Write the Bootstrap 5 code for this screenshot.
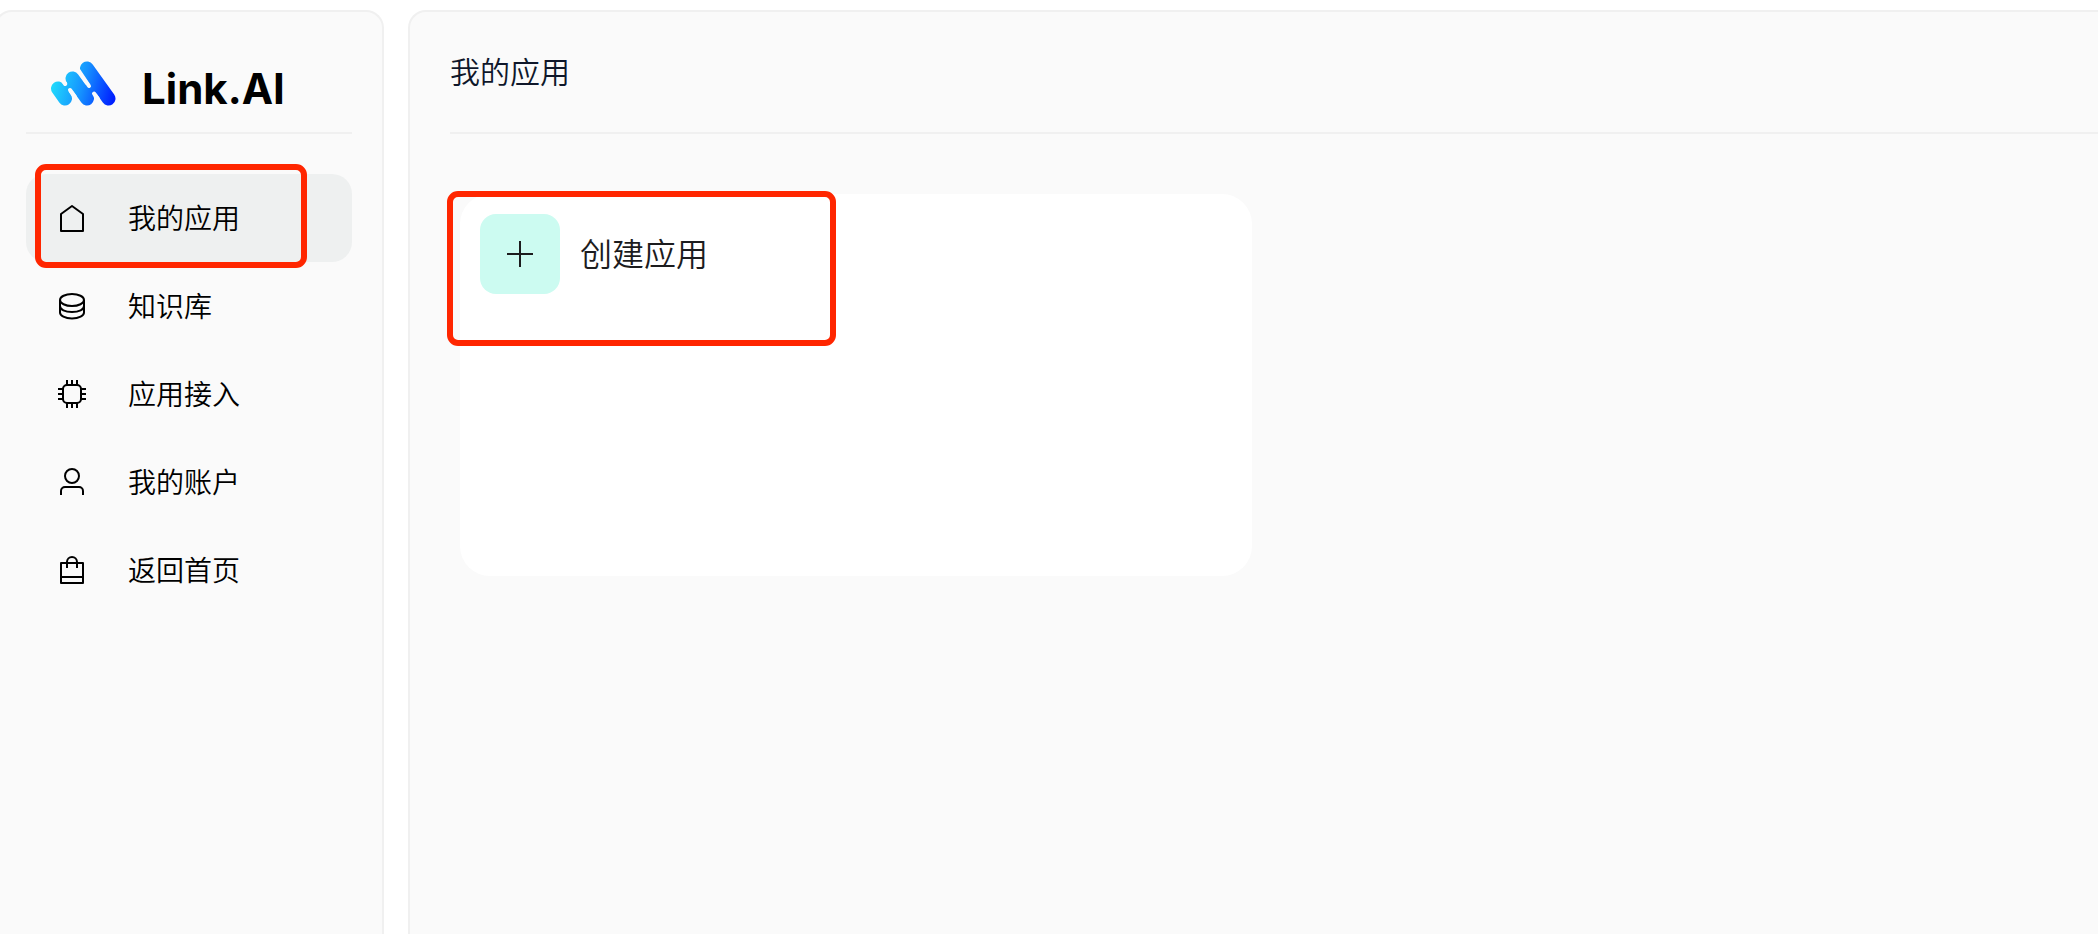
<!DOCTYPE html>
<html lang="zh-CN">
<head>
<meta charset="utf-8">
<meta name="viewport" content="width=device-width, initial-scale=1">
<title>Link.AI</title>
<link href="https://cdn.jsdelivr.net/npm/bootstrap@5.3.0/dist/css/bootstrap.min.css" rel="stylesheet">
<style>
  body { font-family: "Noto Sans CJK SC", sans-serif; font-weight: 350; background: #fff; color: #000; overflow-x: hidden; }
  .shell { min-height: 100vh; padding-top: 10px; gap: 24px; }
  .panel { background: #fafafa; border: 2px solid #f0f0f0; border-bottom: 0; }
  .sidebar { width: 390px; margin-left: -6px; padding: 0 30px; border-radius: 18px 18px 0 0; }
  .workspace { min-width: 0; padding-left: 40px; border-right: 0; border-radius: 18px 0 0 0; }
  .panel-head { height: 122px; border-bottom: 2px solid #f0f0f0; }
  .brand { padding: 38px 24px 0; gap: 26px; color: #000; font: 700 42px/46px Inter, "Liberation Sans", sans-serif; }
  .menu { margin-top: 40px; }
  .menu-item { height: 88px; padding: 0 32px; gap: 42px; border-radius: 20px; font-size: 28px; line-height: 40px; color: #000; }
  .menu-item.active { background: #eef0f0; }
  .caption { padding-bottom: 2px; }
  .icon { fill: none; stroke: currentColor; stroke-width: 2; flex: none; }
  .page-title { margin: 0; padding-top: 34px; font-size: 30px; line-height: 48px; font-weight: 350; color: #0f172a; }
  .apps { margin-top: 50px; padding: 10px 22px 10px 10px; }
  .app-card { min-height: 382px; padding: 20px; border-radius: 30px; background: #fff; }
  .create { gap: 20px; font-size: 32px; line-height: 48px; color: #1c1c1e; }
  .create .caption { padding-bottom: 4px; }
  .tile { width: 80px; height: 80px; border-radius: 16px; background: #ccfbf1; }
  /* red call-outs laid over the highlighted controls */
  .callout { position: absolute; border: 6px solid #ff2600; border-radius: 11px; pointer-events: none; }
  .callout-menu { inset: -10px 45px -6px 9px; }
  .callout-card { left: -13px; top: -3px; width: 389px; height: 155px; }
</style>
</head>
<body>
<div class="shell d-flex align-items-stretch">
  <aside class="sidebar panel flex-shrink-0">
    <div class="panel-head">
      <a href="#" class="brand d-flex align-items-end text-decoration-none">
        <svg width="66" height="62" viewBox="50 50 66 62" aria-hidden="true">
          <defs>
            <linearGradient id="brandFill" gradientUnits="userSpaceOnUse" x1="51" y1="78" x2="114" y2="96">
              <stop offset="0" stop-color="#22e1fb"/><stop offset=".5" stop-color="#1591ff"/><stop offset="1" stop-color="#0020ff"/>
            </linearGradient>
          </defs>
          <g stroke="url(#brandFill)" stroke-width="14" stroke-linecap="round" fill="none">
            <path d="M58 88.500 65 98.500M72.500 78.500 87 98.500M87 68.500 108.500 98.500"/>
          </g>
          <path d="M60 87 68 83 74 90 66 93zM82 85 92 84 98 93 90 96z" fill="url(#brandFill)"/>
          <path d="M61 78 65.200 84M70 90 75 97M79 71 89 86M94 93.500 98 99" stroke="#fafafa" stroke-width="4" stroke-linecap="round"/>
        </svg>
        <span>Link.AI</span>
      </a>
    </div>
    <nav class="menu d-flex flex-column">
      <a href="#" class="menu-item active position-relative d-flex align-items-center text-decoration-none" aria-current="page">
        <svg class="icon" width="28" height="28" viewBox="0 0 28 28"><path d="M3 27V10L14 2 25 10V27z" stroke-linejoin="round"/></svg>
        <span class="caption">我的应用</span>
        <span class="callout callout-menu"></span>
      </a>
      <a href="#" class="menu-item d-flex align-items-center text-decoration-none">
        <svg class="icon" width="28" height="28" viewBox="0 0 28 28"><ellipse cx="14" cy="8" rx="12" ry="6"/><path d="M2 8V20.500C2 23.700 7 26.500 14 26.500s12-2.800 12-6V8M2 14c0 3.500 5 6 12 6s12-2.500 12-6"/></svg>
        <span class="caption">知识库</span>
      </a>
      <a href="#" class="menu-item d-flex align-items-center text-decoration-none">
        <svg class="icon" width="28" height="28" viewBox="0 0 28 28"><rect x="5" y="5" width="18" height="18" rx="4"/><path d="M9 0V5M14 0V5M19 0V5M9 23V28M14 23V28M19 23V28M0 9H5M0 14H5M0 19H5M23 9H28M23 14H28M23 19H28"/></svg>
        <span class="caption">应用接入</span>
      </a>
      <a href="#" class="menu-item d-flex align-items-center text-decoration-none">
        <svg class="icon" width="28" height="28" viewBox="0 0 28 28"><circle cx="14" cy="8" r="7"/><path d="M3 27V23a4 4 0 0 1 4-4H21a4 4 0 0 1 4 4V27"/></svg>
        <span class="caption">我的账户</span>
      </a>
      <a href="#" class="menu-item d-flex align-items-center text-decoration-none">
        <svg class="icon" width="28" height="28" viewBox="0 0 28 28"><path d="M3 7H25V27H3zM3 21H25M9 12V6a5 5 0 0 1 10 0V12" stroke-linejoin="round"/></svg>
        <span class="caption">返回首页</span>
      </a>
    </nav>
  </aside>

  <main class="workspace panel flex-grow-1">
    <header class="panel-head">
      <h1 class="page-title">我的应用</h1>
    </header>
    <div class="row g-0">
      <section class="apps col-6">
        <div class="app-card position-relative">
          <a href="#" class="create d-inline-flex align-items-center text-decoration-none">
            <span class="tile d-flex align-items-center justify-content-center">
              <svg class="icon" width="26" height="26" viewBox="0 0 26 26"><path d="M13 0V26M0 13H26"/></svg>
            </span>
            <span class="caption">创建应用</span>
          </a>
          <span class="callout callout-card"></span>
        </div>
      </section>
    </div>
  </main>
</div>
<script src="https://cdn.jsdelivr.net/npm/bootstrap@5.3.0/dist/js/bootstrap.bundle.min.js"></script>
</body>
</html>
